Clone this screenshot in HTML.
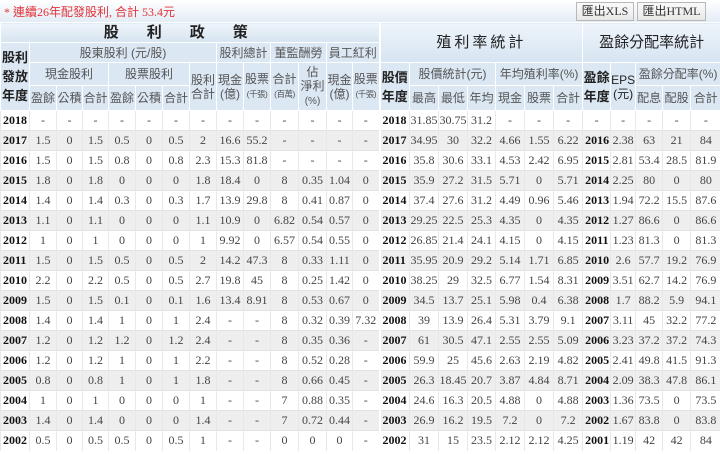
<!DOCTYPE html>
<html><head><meta charset="utf-8">
<style>
*{margin:0;padding:0;box-sizing:border-box}
body{width:720px;height:454px;overflow:hidden;background:#fff;font-family:"Liberation Serif","Noto Sans CJK TC",serif;}
.top{height:22px;background:linear-gradient(#fff,#e3ecf5);position:relative}
.top .msg{position:absolute;left:4px;top:3px;font-size:12px;color:#e0343a;font-family:"Liberation Serif","Noto Sans CJK TC",serif}
.btn{position:absolute;top:2px;height:19px;border:1px solid #b8b8b8;background:linear-gradient(#fafafa,#e8e8e8);font-size:12px;color:#333;line-height:17px;text-align:center}
table{border-collapse:collapse;table-layout:fixed;width:720px}
td,th{overflow:hidden;white-space:nowrap;text-align:center;padding:0}
th{font-weight:normal;color:#555;font-size:12px;background:#dbe7f3;border:1px solid #fff;line-height:14px;font-family:"Liberation Sans","Noto Sans CJK TC",sans-serif}
th.big{font-size:15px;color:#222;background:linear-gradient(#eef4fa,#d6e4f1)}
th.bl{color:#222;font-weight:bold;font-size:13px;line-height:19px}
th.sm{font-size:9px}
span.sm{font-size:8.5px;letter-spacing:-0.5px}
td{height:20px;font-size:12px;color:#444;border-top:1px solid #e2e2e2;border-left:1px solid #e8e8e8}
td.y{font-weight:bold;color:#111;text-align:left;padding-left:2px}
tr.g td{background:#eeeeee}
.sep{border-left:2px solid #fff}
</style></head><body>
<div class="top"><span class="msg">* 連續26年配發股利, 合計 53.4元</span>
<div class="btn" style="left:576px;width:58px">匯出XLS</div>
<div class="btn" style="left:637px;width:69px">匯出HTML</div></div>
<table>
<colgroup>
<col style="width:29px"><col style="width:27px"><col style="width:26px"><col style="width:26px"><col style="width:27px"><col style="width:27px"><col style="width:27px"><col style="width:27px"><col style="width:27px"><col style="width:27px"><col style="width:28px"><col style="width:28px"><col style="width:26px"><col style="width:27px">
<col style="width:30px"><col style="width:29px"><col style="width:29px"><col style="width:28px"><col style="width:29px"><col style="width:29px"><col style="width:29px"><col style="width:28px"><col style="width:25px"><col style="width:27px"><col style="width:28px"><col style="width:30px">
</colgroup>
<tr style="height:20px"><th class="big" colspan="14" style="font-weight:bold;letter-spacing:28px">股利政策</th><th class="big sep" colspan="7" rowspan="2" style="letter-spacing:3px">殖利率統計</th><th class="big" colspan="5" rowspan="2">盈餘分配率統計</th></tr>
<tr style="height:20px"><th class="bl" rowspan="3">股利<br>發放<br>年度</th><th colspan="7">股東股利 (元/股)</th><th colspan="2">股利總計</th><th colspan="2">董監酬勞</th><th colspan="2">員工紅利</th></tr>
<tr style="height:23px"><th colspan="3">現金股利</th><th colspan="3">股票股利</th><th rowspan="2">股利<br>合計</th><th rowspan="2">現金<br>(億)</th><th rowspan="2">股票<br><span class="sm">(千張)</span></th><th rowspan="2">合計<br><span class="sm">(百萬)</span></th><th rowspan="2">佔<br>淨利<br><span style="font-size:10px">(%)</span></th><th rowspan="2">現金<br>(億)</th><th rowspan="2">股票<br><span class="sm">(千張)</span></th>
<th class="bl sep" rowspan="2">股價<br>年度</th><th colspan="3">股價統計(元)</th><th colspan="3">年均殖利率(%)</th><th class="bl" rowspan="2">盈餘<br>年度</th><th rowspan="2" style="color:#222">EPS<br>(元)</th><th colspan="3">盈餘分配率(%)</th></tr>
<tr style="height:25px"><th>盈餘</th><th>公積</th><th>合計</th><th>盈餘</th><th>公積</th><th>合計</th><th>最高</th><th>最低</th><th>年均</th><th>現金</th><th>股票</th><th>合計</th><th>配息</th><th>配股</th><th>合計</th></tr>
<tr><td class="y">2018</td><td>-</td><td>-</td><td>-</td><td>-</td><td>-</td><td>-</td><td>-</td><td>-</td><td>-</td><td>-</td><td>-</td><td>-</td><td>-</td><td class="y sep">2018</td><td>31.85</td><td>30.75</td><td>31.2</td><td>-</td><td>-</td><td>-</td><td>-</td><td>-</td><td>-</td><td>-</td><td>-</td></tr>
<tr class="g"><td class="y">2017</td><td>1.5</td><td>0</td><td>1.5</td><td>0.5</td><td>0</td><td>0.5</td><td>2</td><td>16.6</td><td>55.2</td><td>-</td><td>-</td><td>-</td><td>-</td><td class="y sep">2017</td><td>34.95</td><td>30</td><td>32.2</td><td>4.66</td><td>1.55</td><td>6.22</td><td class="y">2016</td><td>2.38</td><td>63</td><td>21</td><td>84</td></tr>
<tr><td class="y">2016</td><td>1.5</td><td>0</td><td>1.5</td><td>0.8</td><td>0</td><td>0.8</td><td>2.3</td><td>15.3</td><td>81.8</td><td>-</td><td>-</td><td>-</td><td>-</td><td class="y sep">2016</td><td>35.8</td><td>30.6</td><td>33.1</td><td>4.53</td><td>2.42</td><td>6.95</td><td class="y">2015</td><td>2.81</td><td>53.4</td><td>28.5</td><td>81.9</td></tr>
<tr class="g"><td class="y">2015</td><td>1.8</td><td>0</td><td>1.8</td><td>0</td><td>0</td><td>0</td><td>1.8</td><td>18.4</td><td>0</td><td>8</td><td>0.35</td><td>1.04</td><td>0</td><td class="y sep">2015</td><td>35.9</td><td>27.2</td><td>31.5</td><td>5.71</td><td>0</td><td>5.71</td><td class="y">2014</td><td>2.25</td><td>80</td><td>0</td><td>80</td></tr>
<tr><td class="y">2014</td><td>1.4</td><td>0</td><td>1.4</td><td>0.3</td><td>0</td><td>0.3</td><td>1.7</td><td>13.9</td><td>29.8</td><td>8</td><td>0.41</td><td>0.87</td><td>0</td><td class="y sep">2014</td><td>37.4</td><td>27.6</td><td>31.2</td><td>4.49</td><td>0.96</td><td>5.46</td><td class="y">2013</td><td>1.94</td><td>72.2</td><td>15.5</td><td>87.6</td></tr>
<tr class="g"><td class="y">2013</td><td>1.1</td><td>0</td><td>1.1</td><td>0</td><td>0</td><td>0</td><td>1.1</td><td>10.9</td><td>0</td><td>6.82</td><td>0.54</td><td>0.57</td><td>0</td><td class="y sep">2013</td><td>29.25</td><td>22.5</td><td>25.3</td><td>4.35</td><td>0</td><td>4.35</td><td class="y">2012</td><td>1.27</td><td>86.6</td><td>0</td><td>86.6</td></tr>
<tr><td class="y">2012</td><td>1</td><td>0</td><td>1</td><td>0</td><td>0</td><td>0</td><td>1</td><td>9.92</td><td>0</td><td>6.57</td><td>0.54</td><td>0.55</td><td>0</td><td class="y sep">2012</td><td>26.85</td><td>21.4</td><td>24.1</td><td>4.15</td><td>0</td><td>4.15</td><td class="y">2011</td><td>1.23</td><td>81.3</td><td>0</td><td>81.3</td></tr>
<tr class="g"><td class="y">2011</td><td>1.5</td><td>0</td><td>1.5</td><td>0.5</td><td>0</td><td>0.5</td><td>2</td><td>14.2</td><td>47.3</td><td>8</td><td>0.33</td><td>1.11</td><td>0</td><td class="y sep">2011</td><td>35.95</td><td>20.9</td><td>29.2</td><td>5.14</td><td>1.71</td><td>6.85</td><td class="y">2010</td><td>2.6</td><td>57.7</td><td>19.2</td><td>76.9</td></tr>
<tr><td class="y">2010</td><td>2.2</td><td>0</td><td>2.2</td><td>0.5</td><td>0</td><td>0.5</td><td>2.7</td><td>19.8</td><td>45</td><td>8</td><td>0.25</td><td>1.42</td><td>0</td><td class="y sep">2010</td><td>38.25</td><td>29</td><td>32.5</td><td>6.77</td><td>1.54</td><td>8.31</td><td class="y">2009</td><td>3.51</td><td>62.7</td><td>14.2</td><td>76.9</td></tr>
<tr class="g"><td class="y">2009</td><td>1.5</td><td>0</td><td>1.5</td><td>0.1</td><td>0</td><td>0.1</td><td>1.6</td><td>13.4</td><td>8.91</td><td>8</td><td>0.53</td><td>0.67</td><td>0</td><td class="y sep">2009</td><td>34.5</td><td>13.7</td><td>25.1</td><td>5.98</td><td>0.4</td><td>6.38</td><td class="y">2008</td><td>1.7</td><td>88.2</td><td>5.9</td><td>94.1</td></tr>
<tr><td class="y">2008</td><td>1.4</td><td>0</td><td>1.4</td><td>1</td><td>0</td><td>1</td><td>2.4</td><td>-</td><td>-</td><td>8</td><td>0.32</td><td>0.39</td><td>7.32</td><td class="y sep">2008</td><td>39</td><td>13.9</td><td>26.4</td><td>5.31</td><td>3.79</td><td>9.1</td><td class="y">2007</td><td>3.11</td><td>45</td><td>32.2</td><td>77.2</td></tr>
<tr class="g"><td class="y">2007</td><td>1.2</td><td>0</td><td>1.2</td><td>1.2</td><td>0</td><td>1.2</td><td>2.4</td><td>-</td><td>-</td><td>8</td><td>0.35</td><td>0.36</td><td>-</td><td class="y sep">2007</td><td>61</td><td>30.5</td><td>47.1</td><td>2.55</td><td>2.55</td><td>5.09</td><td class="y">2006</td><td>3.23</td><td>37.2</td><td>37.2</td><td>74.3</td></tr>
<tr><td class="y">2006</td><td>1.2</td><td>0</td><td>1.2</td><td>1</td><td>0</td><td>1</td><td>2.2</td><td>-</td><td>-</td><td>8</td><td>0.52</td><td>0.28</td><td>-</td><td class="y sep">2006</td><td>59.9</td><td>25</td><td>45.6</td><td>2.63</td><td>2.19</td><td>4.82</td><td class="y">2005</td><td>2.41</td><td>49.8</td><td>41.5</td><td>91.3</td></tr>
<tr class="g"><td class="y">2005</td><td>0.8</td><td>0</td><td>0.8</td><td>1</td><td>0</td><td>1</td><td>1.8</td><td>-</td><td>-</td><td>8</td><td>0.66</td><td>0.45</td><td>-</td><td class="y sep">2005</td><td>26.3</td><td>18.45</td><td>20.7</td><td>3.87</td><td>4.84</td><td>8.71</td><td class="y">2004</td><td>2.09</td><td>38.3</td><td>47.8</td><td>86.1</td></tr>
<tr><td class="y">2004</td><td>1</td><td>0</td><td>1</td><td>0</td><td>0</td><td>0</td><td>1</td><td>-</td><td>-</td><td>7</td><td>0.88</td><td>0.35</td><td>-</td><td class="y sep">2004</td><td>24.6</td><td>16.3</td><td>20.5</td><td>4.88</td><td>0</td><td>4.88</td><td class="y">2003</td><td>1.36</td><td>73.5</td><td>0</td><td>73.5</td></tr>
<tr class="g"><td class="y">2003</td><td>1.4</td><td>0</td><td>1.4</td><td>0</td><td>0</td><td>0</td><td>1.4</td><td>-</td><td>-</td><td>7</td><td>0.72</td><td>0.44</td><td>-</td><td class="y sep">2003</td><td>26.9</td><td>16.2</td><td>19.5</td><td>7.2</td><td>0</td><td>7.2</td><td class="y">2002</td><td>1.67</td><td>83.8</td><td>0</td><td>83.8</td></tr>
<tr><td class="y">2002</td><td>0.5</td><td>0</td><td>0.5</td><td>0.5</td><td>0</td><td>0.5</td><td>1</td><td>-</td><td>-</td><td>0</td><td>0</td><td>0</td><td>-</td><td class="y sep">2002</td><td>31</td><td>15</td><td>23.5</td><td>2.12</td><td>2.12</td><td>4.25</td><td class="y">2001</td><td>1.19</td><td>42</td><td>42</td><td>84</td></tr>
</table>
</body></html>
